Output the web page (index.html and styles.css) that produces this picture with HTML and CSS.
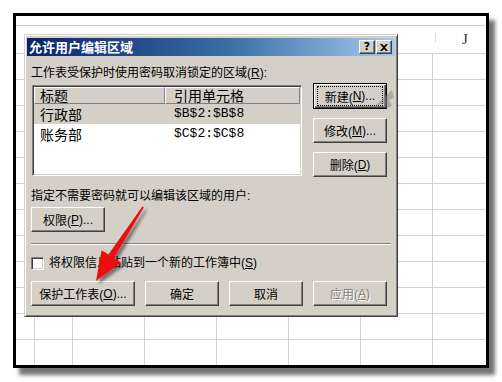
FILE: index.html
```html
<!DOCTYPE html>
<html lang="zh-CN">
<head>
    <meta charset="UTF-8">
    <title>允许用户编辑区域</title>
    <link rel="stylesheet" href="styles.css">
</head>
<body>
<div class="page">
    <div class="frame">
        <div class="bar"></div>
        <div class="colhead"><span class="tick"></span><span class="col-j">J</span></div>
        <div class="cells"></div>

        <div class="dialog">
            <div class="titlebar">
                <span class="title">允许用户编辑区域</span>
                <span class="tbtn help">?</span>
                <span class="tbtn close">
                    <svg width="8" height="7" viewBox="0 0 8 7"><path d="M0 0h2l2 2 2-2h2L5 3.5 8 7H6L4 5 2 7H0l3-3.5z" fill="#000"/></svg>
                </span>
            </div>
            <div class="body">
                <div class="top">
                    <div class="top-left">
                        <div class="label">工作表受保护时使用密码取消锁定的区域(<u>R</u>):</div>
                        <div class="list">
                            <div class="list-head">
                                <div class="hc c1">标题</div>
                                <div class="hc c2">引用单元格</div>
                            </div>
                            <div class="row sel">
                                <div class="c1">行政部</div>
                                <div class="c2 ref">$B$2:$B$8</div>
                            </div>
                            <div class="row">
                                <div class="c1">账务部</div>
                                <div class="c2 ref">$C$2:$C$8</div>
                            </div>
                        </div>
                    </div>
                    <div class="top-right">
                        <div class="btn default"><span class="focus">新建(<u>N</u>)...</span></div>
                        <div class="btn">修改(<u>M</u>)...</div>
                        <div class="btn">删除(<u>D</u>)</div>
                    </div>
                </div>

                <div class="label users">指定不需要密码就可以编辑该区域的用户:</div>
                <div class="btn perm">权限(<u>P</u>)...</div>

                <div class="sep"></div>

                <div class="check-row">
                    <span class="checkbox"></span>
                    <span class="label">将权限信息粘贴到一个新的工作簿中(<u>S</u>)</span>
                </div>

                <div class="actions">
                    <div class="btn wide">保护工作表(<u>O</u>)...</div>
                    <div class="btn">确定</div>
                    <div class="btn">取消</div>
                    <div class="btn disabled">应用(<u>A</u>)</div>
                </div>
            </div>
        </div>
    </div>

    <!-- 红色箭头标注 + 鼠标残影 -->
    <svg class="overlay" width="502" height="382" viewBox="0 0 502 382">
        <defs>
            <filter id="sh" x="-50%" y="-50%" width="200%" height="200%">
                <feDropShadow dx="3" dy="3" stdDeviation="1.5" flood-color="#000" flood-opacity="0.45"/>
            </filter>
        </defs>
        <path d="M375 106 L392 90 L394 98 L389 100 L392 106 L386 108 L384 103 Z" fill="#8a8a8a" opacity="0.55"/>
        <g filter="url(#sh)">
            <path d="M142.6 206.2 L143.8 207.6 L113.9 258 L108.4 254.6 Z" fill="#ee1111"/>
            <path d="M96 281 L101.6 250.2 L121 262.6 Z" fill="#ee1111"/>
        </g>
    </svg>
</div>
</body>
</html>
```

FILE: styles.css
```css
*{
    padding: 0;
    margin: 0;
    box-sizing: border-box;
}
body{
    background: #fff;
    font-family: "Liberation Sans", "Noto Sans CJK SC", sans-serif;
    font-size: 12px;
    color: #000;
}
u{
    text-decoration: underline;
    text-underline-offset: 1px;
}
.page{
    position: relative;
    width: 502px;
    height: 382px;
    padding: 13px;
}
.frame{
    position: relative;
    width: 476px;
    height: 355px;
    border: 3px solid #000;
    background: #fff;
    box-shadow: 6px 7px 4px rgba(0,0,0,.55);
    display: flex;
    flex-direction: column;
}
.bar{
    height: 10px;
    border-bottom: 1px solid #cfcfcf;
}
.colhead{
    height: 27px;
    display: flex;
    align-items: center;
    padding-left: 419px;
}
.tick{
    width: 1px;
    height: 9px;
    background: #dcdcdc;
    margin-top: -4px;
}
.col-j{
    margin-left: 26px;
    font-family: "Liberation Serif", serif;
    font-size: 15px;
    color: #333;
}
.cells{
    flex: 1;
    background-image:
        repeating-linear-gradient(to right, #d2d2d2 0, #d2d2d2 1px, transparent 1px, transparent 72px),
        repeating-linear-gradient(to bottom, #d2d2d2 0, #d2d2d2 1px, transparent 1px, transparent 26px);
    background-position: 56px 0, 0 0;
}

/* 对话框 */
.dialog{
    position: absolute;
    left: 8px;
    top: 18px;
    width: 374px;
    background: #d4d0c8;
    border: 1px solid;
    border-color: #d4d0c8 #404040 #404040 #d4d0c8;
    box-shadow: inset 1px 1px #fff, inset -1px -1px #808080;
    padding: 3px 2px 10px 2px;
}
.titlebar{
    height: 18px;
    display: flex;
    align-items: center;
    padding: 0 3px 0 2px;
    background: linear-gradient(to right, #0a246a, #3a6ea5 55%, #a6caf0);
}
.title{
    flex: 1;
    color: #fff;
    font-family: "Noto Sans CJK SC", sans-serif;
    font-weight: bold;
    font-size: 13px;
    line-height: 18px;
}
.tbtn{
    width: 16px;
    height: 14px;
    display: flex;
    align-items: center;
    justify-content: center;
    background: #d4d0c8;
    border: 1px solid;
    border-color: #fff #404040 #404040 #fff;
    box-shadow: inset -1px -1px #808080;
    font-family: "DejaVu Sans", sans-serif;
    font-weight: bold;
    font-size: 11px;
    line-height: 12px;
}
.tbtn.help{
    margin-right: 1px;
}
.body{
    padding: 9px 4px 0 4px;
}
.label{
    height: 16px;
    line-height: 16px;
    white-space: nowrap;
}
.top{
    display: flex;
    gap: 11px;
}
.top-left{
    width: 271px;
}
.top-left .label{
    margin-bottom: 4px;
}
.list{
    margin-left: 1px;
    width: 270px;
    height: 91px;
    background: #fff;
    border: 1px solid;
    border-color: #808080 #fff #fff #808080;
    box-shadow: inset 1px 1px #404040, inset -1px -1px #d4d0c8;
    padding: 1px;
    font-family: "Noto Sans CJK SC", sans-serif;
    font-size: 14px;
}
.list-head{
    display: flex;
    height: 17px;
}
.hc{
    background: #d4d0c8;
    border: 1px solid;
    border-color: #fff #808080 #808080 #fff;
    line-height: 14px;
}
.c1{
    width: 131px;
    padding-left: 5px;
}
.c2{
    flex: 1;
    padding-left: 8px;
}
.row{
    display: flex;
    height: 20px;
    line-height: 20px;
}
.row .c1{
    padding-left: 6px;
}
.row .c2{
    padding-left: 9px;
}
.row.sel{
    background: #d4d0c8;
}
.ref{
    font-family: "Liberation Mono", monospace;
    font-size: 13px;
}
.top-right{
    width: 74px;
    padding-top: 18px;
    display: flex;
    flex-direction: column;
    gap: 9px;
}

/* 按钮 */
.btn{
    width: 74px;
    height: 25px;
    display: flex;
    align-items: center;
    justify-content: center;
    background: #d4d0c8;
    border: 1px solid;
    border-color: #fff #404040 #404040 #fff;
    box-shadow: inset -1px -1px #808080, inset 1px 1px #d4d0c8;
    white-space: nowrap;
}
.btn.default{
    height: 26px;
    border: 1px solid #000;
    box-shadow: inset 1px 1px #fff, inset -1px -1px #404040, inset -2px -2px #808080;
}
.focus{
    width: 64px;
    height: 18px;
    display: flex;
    align-items: center;
    justify-content: center;
    outline: 1px dotted #000;
}
.btn.disabled{
    color: #808080;
    text-shadow: 1px 1px #fff;
}
.users{
    margin-top: 11px;
}
.perm{
    margin-top: 3px;
}
.sep{
    margin-top: 11px;
    height: 2px;
    border-top: 1px solid #808080;
    border-bottom: 1px solid #fff;
}
.check-row{
    margin-top: 10px;
    display: flex;
    align-items: center;
    gap: 5px;
    height: 16px;
}
.checkbox{
    width: 13px;
    height: 13px;
    background: #fff;
    border: 1px solid;
    border-color: #808080 #fff #fff #808080;
    box-shadow: inset 1px 1px #404040, inset -1px -1px #d4d0c8;
}
.actions{
    margin-top: 10px;
    display: flex;
    gap: 10px;
}
.btn.wide{
    width: 104px;
}

.overlay{
    position: absolute;
    left: 0;
    top: 0;
    pointer-events: none;
}
```
